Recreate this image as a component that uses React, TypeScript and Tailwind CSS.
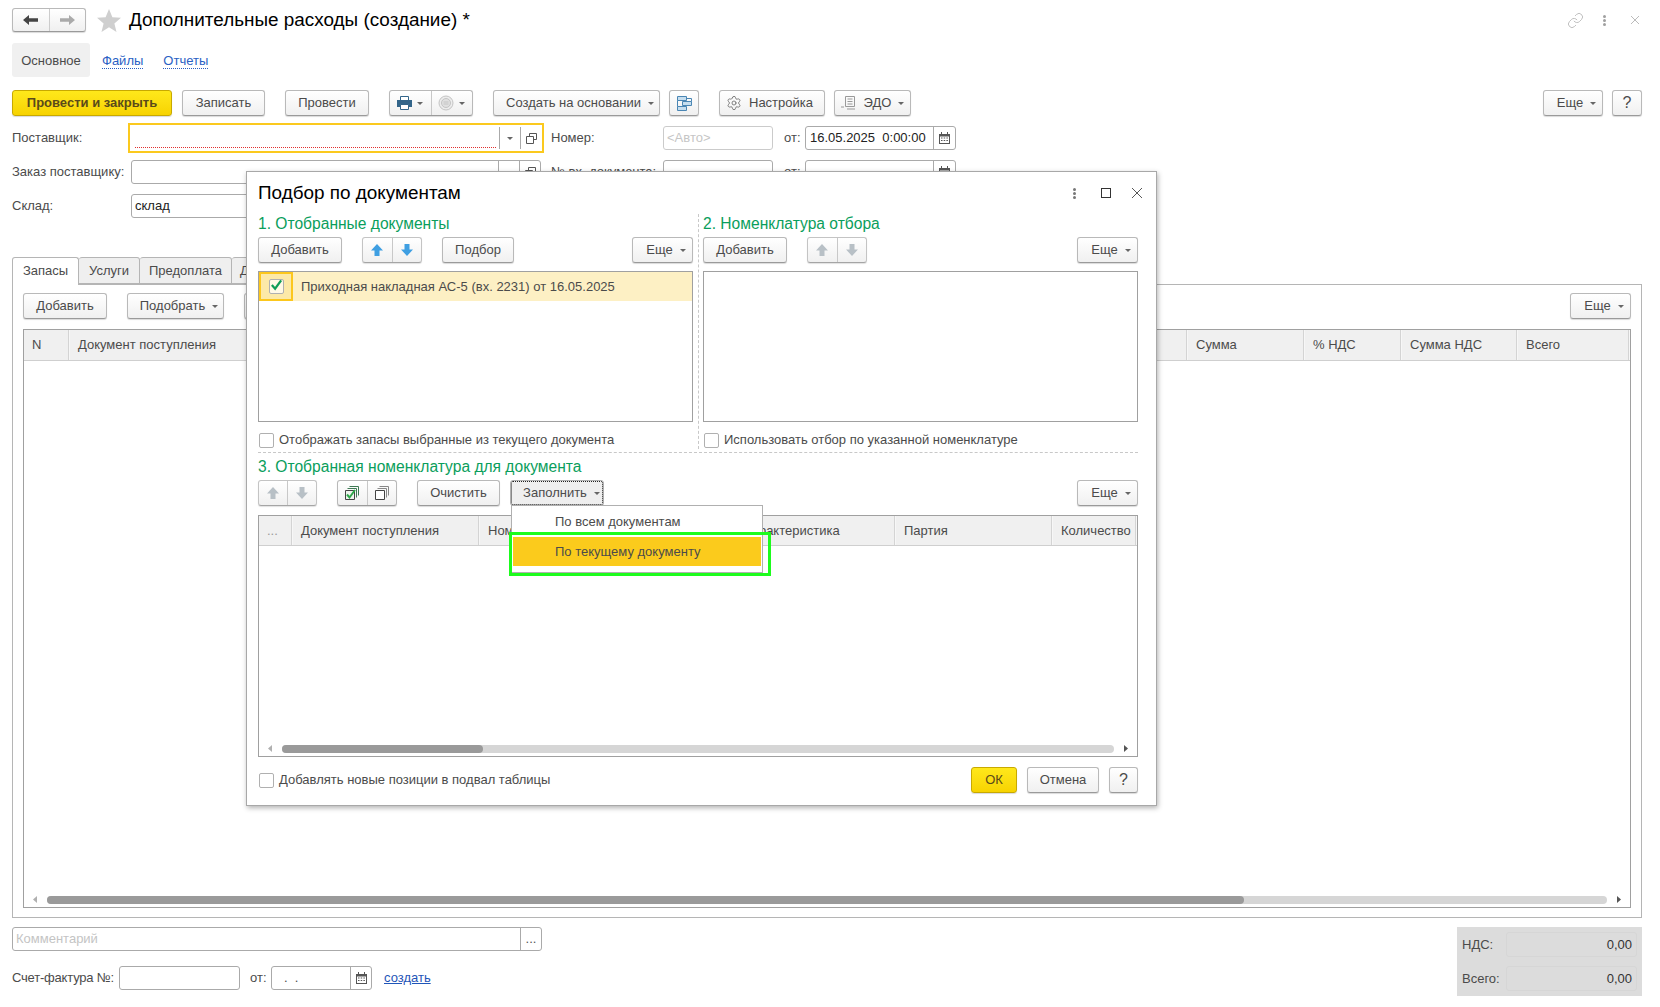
import React from 'react';
import { Settings, Link } from 'lucide-react';

const Caret = () => (
  <svg width="6" height="3" viewBox="0 0 6 3" className="shrink-0">
    <path d="M0 0h6L3 3z" fill="#666" />
  </svg>
);

const Btn: React.FC<{ className?: string; primary?: boolean; children: React.ReactNode }> = ({ className = '', primary, children }) => (
  <div className={`flex items-center justify-center gap-[7px] h-[26px] shrink-0 rounded-[3px] border bg-gradient-to-b shadow-[0_1px_1px_rgba(0,0,0,0.15)] ${primary ? 'border-[#c8a900] from-[#ffe81a] to-[#f7d300] text-[#5a4a1a]' : 'border-[#b9b9b9] border-b-[#9a9a9a] from-white to-[#f0f0f0] text-[#4b4b4b]'} ${className}`}>
    {children}
  </div>
);

const Arrow: React.FC<{ dir: 'up' | 'down'; color: string }> = ({ dir, color }) => (
  <svg width="14" height="14" viewBox="0 0 14 14" className={dir === 'down' ? 'rotate-180' : ''}>
    <path d="M7 1l6 6.500H9.500V13h-5V7.500H1z" fill={color} />
  </svg>
);

const ArrowGroup: React.FC<{ color: string; className?: string }> = ({ color, className = '' }) => (
  <div className={`flex h-[26px] shrink-0 rounded-[3px] border border-[#c4c4c4] border-b-[#a5a5a5] bg-gradient-to-b from-white to-[#f0f0f0] shadow-[0_1px_1px_rgba(0,0,0,0.12)] ${className}`}>
    <div className="flex-1 flex items-center justify-center border-r border-[#c8c8c8]"><Arrow dir="up" color={color} /></div>
    <div className="flex-1 flex items-center justify-center"><Arrow dir="down" color={color} /></div>
  </div>
);

const NavArrow: React.FC<{ flip?: boolean; color: string }> = ({ flip, color }) => (
  <svg width="15" height="12" viewBox="0 0 15 12" className={flip ? 'rotate-180' : ''}>
    <path d="M0 6l6-5v3.200h9v3.600H6V11z" fill={color} />
  </svg>
);

const Calendar = () => (
  <svg width="11" height="12" viewBox="0 0 11 12">
    <path d="M0 2h11v10H0z" fill="#555" />
    <path d="M2 0h1v3H2zM8 0h1v3H8z" fill="#555" />
    <path d="M1 4.500h9V11H1z" fill="#fff" />
    <path d="M2 5.500h1.500v1H2zM4.700 5.500h1.500v1H4.700zM7.400 5.500h1.500v1H7.400zM2 8h1.500v1H2zM4.700 8h1.500v1H4.700zM7.400 8h1.500v1H7.400z" fill="#555" />
  </svg>
);

const OpenIcon = () => (
  <svg width="11" height="11" viewBox="0 0 11 11" fill="none" stroke="#555">
    <path d="M3.500 3V.5h7v6H8" />
    <path d="M.5 3.500h7v7h-7z" />
  </svg>
);

const Dots: React.FC<{ color: string }> = ({ color }) => (
  <div className="flex flex-col gap-[1px]">
    <div className={`w-[3px] h-[3px] rounded-full ${color}`} />
    <div className={`w-[3px] h-[3px] rounded-full ${color}`} />
    <div className={`w-[3px] h-[3px] rounded-full ${color}`} />
  </div>
);

const Cross: React.FC<{ size: number; color: string }> = ({ size, color }) => (
  <svg width={size} height={size} viewBox="0 0 10 10" stroke={color} strokeWidth="0.9">
    <path d="M0 0l10 10M10 0L0 10" />
  </svg>
);

const Check: React.FC<{ label: string }> = ({ label }) => (
  <div className="flex items-center h-[18px]">
    <div className="w-[15px] h-[15px] ml-[1px] rounded-[2px] border border-[#b0b0b0] bg-white" />
    <span className="ml-[5px]">{label}</span>
  </div>
);

const Field: React.FC<{ className?: string; children?: React.ReactNode }> = ({ className = '', children }) => (
  <div className={`flex items-center h-[24px] shrink-0 rounded-[3px] border border-[#aaaaaa] bg-white ${className}`}>{children}</div>
);

const HeadCell: React.FC<{ className?: string; children?: React.ReactNode }> = ({ className = '', children }) => (
  <div className={`flex items-center h-full shrink-0 pl-[8px] border-r border-r-[#f7f7f7] shadow-[inset_-1px_0_0_#d4d4d4] overflow-hidden whitespace-nowrap ${className}`}>{children}</div>
);

const Scroll: React.FC<{ thumb: string }> = ({ thumb }) => (
  <div className="flex items-center h-[15px] shrink-0">
    <svg width="4" height="7" viewBox="0 0 4 7" className="mr-[10px]"><path d="M4 0v7L0 3.500z" fill="#b0b0b0" /></svg>
    <div className="flex-1 h-[8px] rounded-full bg-[#d6d6d6]">
      <div className={`h-full rounded-full bg-[#9a9a9a] ${thumb}`} />
    </div>
    <svg width="4" height="7" viewBox="0 0 4 7" className="ml-[10px]"><path d="M0 0v7l4-3.500z" fill="#555" /></svg>
  </div>
);

const SectionTitle: React.FC<{ children: React.ReactNode }> = ({ children }) => (
  <div className="flex items-center h-[20px] text-[15.6px] text-[#0a9e5c]">{children}</div>
);

const Dialog = () => (
  <div className="absolute left-[246px] top-[171px] w-[911px] h-[635px] pl-[11px] pr-[18px] bg-white border border-[#a8a8a8] shadow-[1px_2px_5px_rgba(0,0,0,0.3)]">
    <div className="flex items-center h-[42px]">
      <span className="text-[18.9px] text-black">Подбор по документам</span>
      <div className="ml-auto flex items-center -mr-[4px]">
        <Dots color="bg-[#777777]" />
        <div className="ml-[25px] w-[10px] h-[10px] border border-[#333]" />
        <div className="ml-[21px]"><Cross size={10} color="#444" /></div>
      </div>
    </div>

    <div className="flex">
      <div className="w-[435px] shrink-0">
        <SectionTitle>1. Отобранные документы</SectionTitle>
        <div className="flex mt-[3px]">
          <Btn className="w-[84px]">Добавить</Btn>
          <ArrowGroup color="#3f9fe2" className="w-[60px] ml-[20px]" />
          <Btn className="w-[72px] ml-[20px]">Подбор</Btn>
          <Btn className="w-[61px] ml-auto pl-[7px]">Еще <Caret /></Btn>
        </div>
        <div className="mt-[8px] h-[151px] border border-[#a0a0a0]">
          <div className="flex items-center h-[29px] bg-[#fdf0c4]">
            <div className="flex items-center justify-center w-[34px] h-full border-2 border-[#fcc71d] bg-[#fce9a8]">
              <div className="flex items-center justify-center w-[15px] h-[15px] rounded-[2px] border border-[#b0b0b0] bg-[#fff9e6]">
                <svg width="14" height="14" viewBox="0 0 14 14" fill="none" stroke="#0f9d58" strokeWidth="2.4" className="-mt-[3px]"><path d="M2 7l3.500 4L12 2" /></svg>
              </div>
            </div>
            <span className="ml-[8px]">Приходная накладная АС-5 (вх. 2231) от 16.05.2025</span>
          </div>
        </div>
        <div className="mt-[9px]"><Check label="Отображать запасы выбранные из текущего документа" /></div>
      </div>

      <div className="w-[1px] ml-[5px] mr-[4px] shrink-0 border-l border-dashed border-[#c8c8c8]" />

      <div className="w-[435px] shrink-0">
        <SectionTitle>2. Номенклатура отбора</SectionTitle>
        <div className="flex mt-[3px]">
          <Btn className="w-[84px]">Добавить</Btn>
          <ArrowGroup color="#b8c0c6" className="w-[60px] ml-[20px]" />
          <Btn className="w-[61px] ml-auto pl-[7px]">Еще <Caret /></Btn>
        </div>
        <div className="mt-[8px] h-[151px] border border-[#a0a0a0]" />
        <div className="mt-[9px]"><Check label="Использовать отбор по указанной номенклатуре" /></div>
      </div>
    </div>

    <div className="mt-[3px] border-t border-dashed border-[#c8c8c8]" />
    <div className="mt-[4px]"><SectionTitle>3. Отобранная номенклатура для документа</SectionTitle></div>

    <div className="flex mt-[3px]">
      <ArrowGroup color="#b8c0c6" className="w-[59px]" />
      <div className="flex ml-[20px] w-[60px] h-[26px] rounded-[3px] border border-[#b9b9b9] border-b-[#9a9a9a] bg-gradient-to-b from-white to-[#f0f0f0] shadow-[0_1px_1px_rgba(0,0,0,0.15)]">
        <div className="flex-1 flex items-center justify-center border-r border-[#c8c8c8]">
          <svg width="16" height="16" viewBox="0 0 16 16" fill="none">
            <path d="M5.500 1.500h9v9M3.500 3.500h9v9" stroke="#3f7a55" />
            <path d="M1.500 5.500h9v9h-9z" fill="#eef5ee" stroke="#444" />
            <path d="M3 9.500l2.500 3L11 5" stroke="#2ea84a" strokeWidth="2" />
          </svg>
        </div>
        <div className="flex-1 flex items-center justify-center">
          <svg width="16" height="16" viewBox="0 0 16 16" fill="none">
            <path d="M5.500 1.500h9v9M3.500 3.500h9v9" stroke="#888" />
            <path d="M1.500 5.500h9v9h-9z" fill="#fff" stroke="#444" />
          </svg>
        </div>
      </div>
      <Btn className="w-[83px] ml-[20px]">Очистить</Btn>
      <div className="flex items-center justify-center gap-[7px] w-[94px] h-[26px] ml-[10px] pl-[9px] rounded-[3px] border border-[#b0b0b0] bg-[#efefef] outline-1 outline-dotted outline-[#222] -outline-offset-2 text-[#4b4b4b]">
        Заполнить <Caret />
      </div>
      <Btn className="w-[61px] ml-auto pl-[7px]">Еще <Caret /></Btn>
    </div>

    <div className="flex flex-col mt-[9px] h-[242px] border border-[#a0a0a0]">
      <div className="flex h-[30px] shrink-0 bg-[#f0f0f0] border-b border-[#cfcfcf]">
        <HeadCell className="w-[34px] text-[#999]">...</HeadCell>
        <HeadCell className="w-[187px]">Документ поступления</HeadCell>
        <HeadCell className="w-[255px]">Номенклатура</HeadCell>
        <HeadCell className="w-[161px]">Характеристика</HeadCell>
        <HeadCell className="w-[157px]">Партия</HeadCell>
        <HeadCell className="flex-1 shrink">Количество</HeadCell>
      </div>
      <div className="flex-1" />
      <div className="px-[9px]">
        <Scroll thumb="w-[24.2%]" />
      </div>
    </div>

    <div className="flex items-center mt-[10px]">
      <Check label="Добавлять новые позиции в подвал таблицы" />
      <Btn primary className="w-[46px] ml-auto">ОК</Btn>
      <Btn className="w-[72px] ml-[10px]">Отмена</Btn>
      <Btn className="w-[29px] ml-[10px] text-[16px]">?</Btn>
    </div>

    <div className="absolute left-[264px] top-[333px] w-[252px] h-[68px] bg-white border border-[#b0b0b0]">
      <div className="flex items-center h-[31px] pl-[43px]">По всем документам</div>
      <div className="flex items-center h-[29px] mx-[1px] pl-[42px] bg-[#fbcb1c]">По текущему документу</div>
    </div>
    <div className="absolute left-[262px] top-[360px] w-[262px] h-[44px] border-[3px] border-[#1dfc1d]" />
  </div>
);

export default function App() {
  return (
    <div className="relative w-[1660px] h-[1007px] overflow-hidden bg-white font-['Liberation_Sans',Arial,sans-serif] text-[13px] text-[#4b4b4b]">
      {/* Title */}
      <div className="flex items-center h-[24px] mt-[8px] pl-[12px] pr-[20px]">
        <div className="flex w-[74px] h-[24px] rounded-[3px] border border-[#b9b9b9] border-b-[#9a9a9a] bg-gradient-to-b from-white to-[#f0f0f0] shadow-[0_1px_1px_rgba(0,0,0,0.15)]">
          <div className="flex-1 flex items-center justify-center border-r border-[#cccccc]"><NavArrow color="#444" /></div>
          <div className="flex-1 flex items-center justify-center"><NavArrow flip color="#aaa" /></div>
        </div>
        <svg width="24" height="23" viewBox="0 0 24 23" className="ml-[11px]">
          <path d="M12 0l3.400 8.200 8.600.6-6.600 5.600 2.100 8.600L12 18.300l-7.500 4.700 2.100-8.600L0 8.800l8.600-.6z" fill="#cfcfcf" />
        </svg>
        <span className="ml-[8px] text-[18.9px] text-black">Дополнительные расходы (создание) *</span>
        <div className="ml-auto flex items-center">
          <Link size={17} strokeWidth={1.2} className="text-[#b5b5b5]" />
          <div className="ml-[19px]"><Dots color="bg-[#a0a0a0]" /></div>
          <div className="ml-[25px] mr-[1px]"><Cross size={8} color="#a0a0a0" /></div>
        </div>
      </div>

      {/* Sections */}
      <div className="flex items-center h-[34px] mt-[11px] ml-[12px]">
        <div className="flex items-center justify-center w-[78px] h-full pt-[1px] rounded-[3px] bg-[#f0f0f0]">Основное</div>
        <span className="ml-[12px] mt-[1px] text-[#2a5fc4] border-b border-dotted border-[#2a5fc4] leading-[15px]">Файлы</span>
        <span className="ml-[20px] mt-[1px] text-[#2a5fc4] border-b border-dotted border-[#2a5fc4] leading-[15px]">Отчеты</span>
      </div>

      {/* Toolbar */}
      <div className="flex mt-[13px] ml-[12px] mr-[18px]">
        <Btn primary className="w-[160px] font-bold">Провести и закрыть</Btn>
        <Btn className="w-[83px] ml-[10px]">Записать</Btn>
        <Btn className="w-[84px] ml-[20px]">Провести</Btn>
        <div className="flex w-[84px] h-[26px] ml-[20px] rounded-[3px] border border-[#b9b9b9] border-b-[#9a9a9a] bg-gradient-to-b from-white to-[#f0f0f0] shadow-[0_1px_1px_rgba(0,0,0,0.15)]">
          <div className="flex-1 flex items-center justify-center gap-[5px] border-r border-[#c8c8c8]">
            <svg width="15" height="14" viewBox="0 0 15 14">
              <path d="M3.500.5h8v4h-8z" fill="#fff" stroke="#33658a" />
              <path d="M0 4h15v7H0z" fill="#33658a" />
              <path d="M3.500 8.500h8v5h-8z" fill="#fff" stroke="#33658a" />
            </svg>
            <Caret />
          </div>
          <div className="flex-1 flex items-center justify-center gap-[5px]">
            <svg width="16" height="16" viewBox="0 0 16 16" fill="none" stroke="#c4c4c4">
              <circle cx="8" cy="8" r="7" fill="#ececec" />
              <circle cx="8" cy="8" r="4.500" fill="#e0e0e0" />
              <path d="M5.500 7h5M5.500 9h5" />
            </svg>
            <Caret />
          </div>
        </div>
        <Btn className="w-[167px] ml-[20px] pl-[7px]">Создать на основании <Caret /></Btn>
        <Btn className="w-[30px] ml-[9px]">
          <svg width="15" height="15" viewBox="0 0 15 15" fill="none" stroke="#4a86b4">
            <path d="M.5.5h9v4h-9zM5.500 5.500h9v4h-9zM.5 10.500h9v4h-9z" fill="#c6deef" />
            <path d="M9.500 2.500h5v3M.5 4.500v6" />
          </svg>
        </Btn>
        <Btn className="w-[106px] ml-[20px] pr-[5px]"><Settings size={16} strokeWidth={1.2} className="text-[#666]" /><span>Настройка</span></Btn>
        <Btn className="w-[77px] ml-[9px]">
          <svg width="16" height="14" viewBox="0 0 16 14" fill="none" stroke="#999">
            <path d="M4.500.5h9v10h-9zM6.500 3h5M6.500 5.500h5M6.500 8h5" />
            <path d="M0 11h3M14 13h-8" />
          </svg>
          <span>ЭДО</span> <Caret />
        </Btn>
        <Btn className="w-[60px] ml-auto pl-[7px]">Еще <Caret /></Btn>
        <Btn className="w-[30px] ml-[9px] text-[16px]">?</Btn>
      </div>

      {/* Form */}
      <div className="mt-[5px] pl-[12px]">
        <div className="flex items-center h-[34px]">
          <span className="w-[119px] shrink-0">Поставщик:</span>
          <div className="flex items-center w-[416px] h-[30px] -ml-[3px] shrink-0 border-2 border-[#fbc91e] bg-white">
            <div className="flex-1 h-full flex items-end pl-[5px] pr-[3px] pb-[3px]"><div className="w-full border-b border-dotted border-[#e03030]" /></div>
            <div className="flex items-center justify-center w-[21px] h-[22px] border-l border-[#aaaaaa]"><Caret /></div>
            <div className="flex items-center justify-center w-[22px] h-[22px] border-l border-[#aaaaaa]"><OpenIcon /></div>
          </div>
          <span className="w-[112px] shrink-0 ml-[7px]">Номер:</span>
          <Field className="w-[110px] opacity-60 pl-[3px] text-[#a0a0a0]">&lt;Авто&gt;</Field>
          <span className="w-[32px] shrink-0 pl-[11px]">от:</span>
          <Field className="w-[151px] pl-[4px]">
            <span className="flex-1 text-[#222] whitespace-pre">16.05.2025  0:00:00</span>
            <div className="flex items-center justify-center w-[22px] h-full border-l border-[#aaaaaa]"><Calendar /></div>
          </Field>
        </div>
        <div className="flex items-center h-[34px]">
          <span className="w-[119px] shrink-0">Заказ поставщику:</span>
          <Field className="w-[410px] justify-end">
            <div className="flex items-center justify-center w-[21px] h-full border-l border-[#aaaaaa]"><Caret /></div>
            <div className="flex items-center justify-center w-[21px] h-full border-l border-[#aaaaaa]"><OpenIcon /></div>
          </Field>
          <span className="w-[112px] shrink-0 ml-[10px]">№ вх. документа:</span>
          <Field className="w-[110px]" />
          <span className="w-[32px] shrink-0 pl-[11px]">от:</span>
          <Field className="w-[151px] justify-end">
            <div className="flex items-center justify-center w-[22px] h-full border-l border-[#aaaaaa]"><Calendar /></div>
          </Field>
        </div>
        <div className="flex items-center h-[34px]">
          <span className="w-[119px] shrink-0">Склад:</span>
          <Field className="w-[410px] pl-[3px] text-[#222]">склад</Field>
        </div>
      </div>

      {/* Tabs */}
      <div className="flex mt-[34px] ml-[12px] h-[27px]">
        <div className="flex items-center justify-center w-[67px] h-[28px] pb-[2px] rounded-t-[3px] border border-b-0 border-[#b5b5b5] bg-white z-10">Запасы</div>
        <div className="flex items-center justify-center w-[61px] rounded-t-[3px] border border-l-0 border-[#b5b5b5] bg-[#efefef]">Услуги</div>
        <div className="flex items-center justify-center w-[92px] rounded-t-[3px] border border-l-0 border-[#b5b5b5] bg-[#efefef]">Предоплата</div>
        <div className="flex items-center w-[120px] pl-[8px] rounded-t-[3px] border border-l-0 border-[#b5b5b5] bg-[#efefef]">Доп. расходы</div>
      </div>

      <div className="flex flex-col h-[634px] ml-[12px] w-[1630px] px-[10px] border border-[#b5b5b5]">
        <div className="flex mt-[8px]">
          <Btn className="w-[84px]">Добавить</Btn>
          <Btn className="w-[97px] ml-[20px] pl-[7px]">Подобрать <Caret /></Btn>
          <Btn className="w-[84px] ml-[20px]">Заполнить</Btn>
          <Btn className="w-[61px] ml-auto pl-[7px]">Еще <Caret /></Btn>
        </div>
        <div className="flex flex-col flex-1 mt-[10px] mb-[9px] border border-[#a0a0a0]">
          <div className="flex h-[31px] shrink-0 bg-[#f0f0f0] border-b border-[#cfcfcf]">
            <HeadCell className="w-[46px]">N</HeadCell>
            <HeadCell className="flex-1 shrink">Документ поступления</HeadCell>
            <HeadCell className="w-[117px]">Сумма</HeadCell>
            <HeadCell className="w-[97px]">% НДС</HeadCell>
            <HeadCell className="w-[116px]">Сумма НДС</HeadCell>
            <HeadCell className="w-[112px]">Всего</HeadCell>
          </div>
          <div className="flex-1" />
          <div className="px-[9px]">
            <Scroll thumb="w-[76.7%]" />
          </div>
        </div>
      </div>

      {/* Footer */}
      <div className="flex justify-between mt-[9px] ml-[12px] mr-[18px]">
        <div className="w-[530px]">
          <Field className="w-full pl-[3px] text-[#c4c4c4]">
            <span className="flex-1">Комментарий</span>
            <div className="flex items-center justify-center w-[21px] h-full border-l border-[#aaaaaa] text-[#555]">...</div>
          </Field>
          <div className="flex items-center mt-[15px]">
            <span className="w-[107px] shrink-0 tracking-[-0.2px]">Счет-фактура №:</span>
            <Field className="w-[121px]" />
            <span className="ml-[10px] w-[21px]">от:</span>
            <Field className="w-[101px] pl-[12px]">
              <span className="flex-1 whitespace-pre">.  .</span>
              <div className="flex items-center justify-center w-[21px] h-full border-l border-[#aaaaaa]"><Calendar /></div>
            </Field>
            <span className="ml-[12px] text-[#1f55b8] underline">создать</span>
          </div>
        </div>
        <div className="flex flex-col justify-between w-[185px] h-[69px] px-[5px] py-[5px] bg-[#dcdcdc]">
          <div className="flex items-center h-[25px]">
            <span className="w-[44px] shrink-0">НДС:</span>
            <div className="flex-1 h-full flex items-center justify-end pr-[4px] rounded-[3px] border border-[#d6d6d6] text-[#333]">0,00</div>
          </div>
          <div className="flex items-center h-[25px]">
            <span className="w-[44px] shrink-0">Всего:</span>
            <div className="flex-1 h-full flex items-center justify-end pr-[4px] rounded-[3px] border border-[#d6d6d6] text-[#333]">0,00</div>
          </div>
        </div>
      </div>

      <Dialog />
    </div>
  );
}
